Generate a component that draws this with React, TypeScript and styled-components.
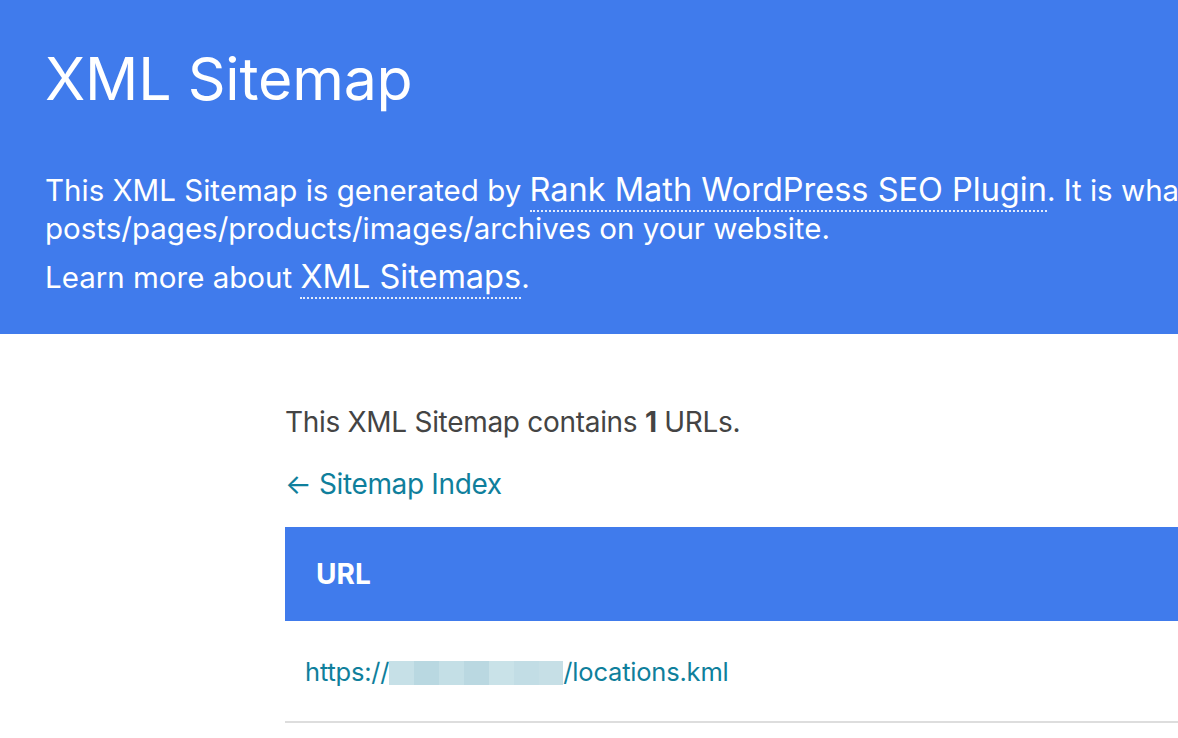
import React from 'react'
import styled, { createGlobalStyle } from 'styled-components'

const GlobalStyle = createGlobalStyle`
  html, body {
    margin: 0;
    padding: 0;
    background: #fff;
    overflow: hidden;
  }
  body {
    font-family: 'Inter', 'Noto Sans', sans-serif;
    color: #444;
    -webkit-font-smoothing: antialiased;
  }
`

const Header = styled.header`
  background: #407bec;
  color: #fff;
  padding: 44px 0 38px 45px;
  white-space: nowrap;
  overflow: hidden;
`

const Title = styled.h1`
  margin: 0 0 57px;
  font-size: 59px;
  line-height: 70px;
  font-weight: 400;
  letter-spacing: -0.2px;
`

const Intro = styled.p<{ $gap: number }>`
  margin: 0 0 ${(p) => p.$gap}px;
  font-size: 29.5px;
  line-height: 38px;
`

const HeaderLink = styled.a`
  color: #fff;
  font-size: 32.5px;
  line-height: 1;
  text-decoration: none;
  border-bottom: 2px dotted rgba(255, 255, 255, 0.85);
  padding-bottom: 1px;
`

const Content = styled.main`
  margin: 69px 0 0 285px;
  width: 1100px;
`

const Summary = styled.p`
  margin: 0 0 24px;
  font-size: 28px;
  line-height: 38px;
  letter-spacing: -0.3px;
  color: #444;

  strong {
    font-weight: 700;
  }
`

const BackLink = styled.a`
  display: block;
  margin: 0 0 24px;
  font-size: 28px;
  line-height: 38px;
  letter-spacing: -0.35px;
  color: #0f7f9c;
  text-decoration: none;
`

const Table = styled.table`
  width: 100%;
  border-collapse: collapse;
`

const HeadCell = styled.th`
  background: #407bec;
  color: #fff;
  text-align: left;
  font-size: 28px;
  font-weight: 700;
  height: 94px;
  padding: 0 0 0 31px;
  box-sizing: border-box;
`

const Cell = styled.td`
  height: 101px;
  padding: 0 0 0 20px;
  box-sizing: border-box;
  border-bottom: 2px solid #ddd;
  font-size: 25.5px;
  letter-spacing: -0.2px;
`

const UrlLink = styled.a`
  color: #0f7f9c;
  text-decoration: none;
  white-space: nowrap;
`

const Redacted = styled.span`
  display: inline-flex;
  vertical-align: -4px;
  height: 24px;
  width: 174px;
`

const Pixel = styled.span`
  flex: 1;
  height: 100%;
`

const blurColors = ['#c6e0e7', '#b9d8e1', '#c4dfe6', '#bad8e1', '#c9e2e8', '#c2dde5', '#c6dfe6']

export default function App() {
  return (
    <>
      <GlobalStyle />
      <Header>
        <Title>XML Sitemap</Title>
        <Intro $gap={11}>
          This XML Sitemap is generated by{' '}
          <HeaderLink href="#">Rank Math WordPress SEO Plugin</HeaderLink>. It is what
          <br />
          posts/pages/products/images/archives on your website.
        </Intro>
        <Intro $gap={0}>
          Learn more about <HeaderLink href="#">XML Sitemaps</HeaderLink>.
        </Intro>
      </Header>

      <Content>
        <Summary>
          This XML Sitemap contains <strong>1</strong> URLs.
        </Summary>
        <BackLink href="#">← Sitemap Index</BackLink>

        <Table>
          <thead>
            <tr>
              <HeadCell>URL</HeadCell>
            </tr>
          </thead>
          <tbody>
            <tr>
              <Cell>
                <UrlLink href="#">
                  https://
                  <Redacted>
                    {blurColors.map((c, i) => (
                      <Pixel key={i} style={{ background: c }} />
                    ))}
                  </Redacted>
                  /locations.kml
                </UrlLink>
              </Cell>
            </tr>
          </tbody>
        </Table>
      </Content>
    </>
  )
}
